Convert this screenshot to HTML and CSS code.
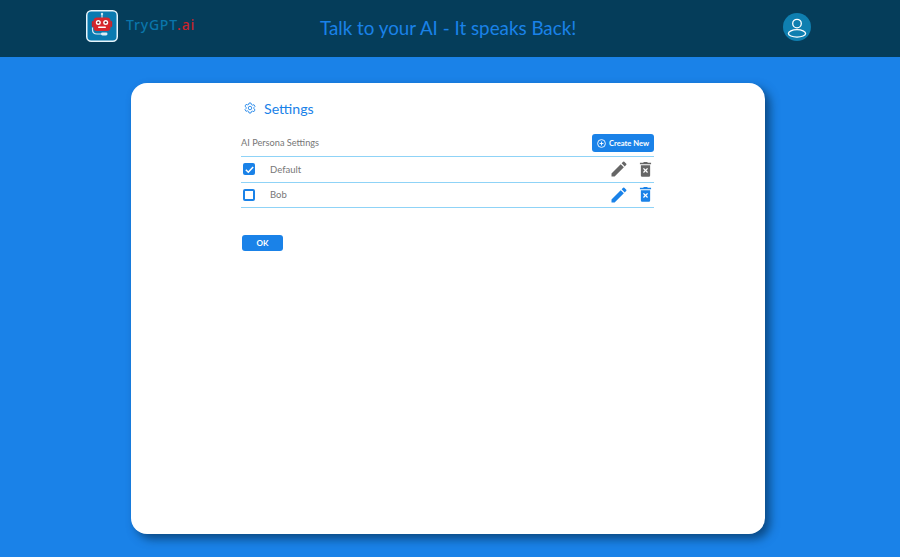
FILE: index.html
```html
<!DOCTYPE html>
<html lang="en">
<head>
<meta charset="utf-8">
<title>TryGPT.ai</title>
<link rel="stylesheet" href="styles.css">
</head>
<body>
<header class="topbar">
  <div class="brand">
    <svg class="logo" viewBox="0 0 32 32" width="32" height="32">
      <rect x="0.75" y="0.75" width="30.5" height="30.5" rx="4.5" fill="#0a7ab0" stroke="#e8f4fa" stroke-width="1.5"/>
      <path d="M16 4v4" stroke="#cfe6f2" stroke-width="1.2"/>
      <circle cx="16" cy="4" r="1.2" fill="#cfe6f2"/>
      <rect x="5.800" y="11" width="2" height="6" rx="1" fill="#c8242b"/>
      <rect x="24.200" y="11" width="2" height="6" rx="1" fill="#c8242b"/>
      <rect x="7.500" y="7.500" width="17" height="13.500" rx="3.500" fill="#d8262c"/>
      <circle cx="12.300" cy="12.500" r="2.500" fill="#fff"/>
      <circle cx="19.700" cy="12.500" r="2.500" fill="#fff"/>
      <circle cx="12.300" cy="12.500" r="1.100" fill="#6b1216"/>
      <circle cx="19.700" cy="12.500" r="1.100" fill="#6b1216"/>
      <rect x="12" y="16.500" width="8" height="1.600" rx="0.800" fill="#fff"/>
      <path d="M6.500 17.500v2c0 3 1.500 4.500 4.500 4.500h5" stroke="#dcecf5" stroke-width="1.200" fill="none"/>
      <rect x="15" y="22.600" width="6.500" height="2.800" rx="1.400" fill="#dcecf5"/>
    </svg>
    <span class="brand-name">TryGPT<span class="brand-ai">.ai</span></span>
  </div>
  <div class="tagline">Talk to your AI - It speaks Back!</div>
  <div class="avatar">
    <svg viewBox="0 0 28 28" width="28" height="28">
      <circle cx="14" cy="14" r="14" fill="#0f7fb0"/>
      <circle cx="14" cy="10.600" r="4.300" fill="none" stroke="#fff" stroke-width="1.300"/>
      <ellipse cx="14" cy="20.400" rx="8.600" ry="3.700" fill="none" stroke="#fff" stroke-width="1.300"/>
    </svg>
  </div>
</header>
<main class="stage">
  <section class="card">
    <h1 class="title">
      <svg class="gear" viewBox="0 0 24 24" width="12" height="12" fill="none" stroke="#1a82e8" stroke-width="1.700" stroke-linejoin="round">
        <path d="M10 2h4l.7 3 2.300 1.300 3-.9 2 3.400-2.200 2.200v2.600l2.200 2.200-2 3.400-3-.9L14.700 19 14 22h-4l-.7-3L7 17.700l-3 .9-2-3.400 2.200-2.200V10.400L2 8.200l2-3.400 3 .9L9.300 5z"/>
        <circle cx="12" cy="12" r="3.500"/>
      </svg>
      <span>Settings</span>
    </h1>
    <div class="section-head">
      <span class="section-label">AI Persona Settings</span>
      <button class="btn btn-create">
        <svg viewBox="0 0 12 12" width="9" height="9" fill="none" stroke="#fff" stroke-width="1.200">
          <circle cx="6" cy="6" r="5.200"/>
          <path d="M6 3.400v5.200M3.400 6h5.200"/>
        </svg>
        Create New
      </button>
    </div>
    <ul class="persona-list">
      <li class="persona">
        <span class="check check-on">
          <svg viewBox="0 0 12 12" width="11" height="11" fill="none" stroke="#fff" stroke-width="1.700"><path d="M2 6.300l2.700 2.700L10 3.300"/></svg>
        </span>
        <span class="persona-name">Default</span>
        <span class="actions muted">
          <svg class="pencil" viewBox="0 0 24 24" width="20" height="20"><path d="M3 17.250V21h3.750L17.810 9.940l-3.750-3.750L3 17.250zM20.710 7.040a1 1 0 0 0 0-1.410l-2.340-2.340a1 1 0 0 0-1.410 0l-1.830 1.830 3.750 3.750 1.830-1.830z"/></svg>
          <svg class="trash" viewBox="0 0 14 16" width="13" height="15"><path fill-rule="evenodd" d="M1 0.800h3.500L5.200 0h3.600l.7.8H13v1.600H1zM2 3.400h10V14.400a1.400 1.400 0 0 1-1.400 1.400H3.400A1.400 1.400 0 0 1 2 14.400zM5.300 6.300L4.300 7.300l1.700 1.700-1.700 1.700 1 1L7 10l1.700 1.700 1-1L8 9l1.700-1.700-1-1L7 8z"/></svg>
        </span>
      </li>
      <li class="persona">
        <span class="check"></span>
        <span class="persona-name">Bob</span>
        <span class="actions">
          <svg class="pencil" viewBox="0 0 24 24" width="20" height="20"><path d="M3 17.250V21h3.750L17.810 9.940l-3.750-3.750L3 17.250zM20.710 7.040a1 1 0 0 0 0-1.410l-2.340-2.340a1 1 0 0 0-1.410 0l-1.830 1.830 3.750 3.750 1.830-1.830z"/></svg>
          <svg class="trash" viewBox="0 0 14 16" width="13" height="15"><path fill-rule="evenodd" d="M1 0.800h3.500L5.200 0h3.600l.7.8H13v1.600H1zM2 3.400h10V14.400a1.400 1.400 0 0 1-1.400 1.400H3.400A1.400 1.400 0 0 1 2 14.400zM5.300 6.300L4.300 7.300l1.700 1.700-1.700 1.700 1 1L7 10l1.700 1.700 1-1L8 9l1.700-1.700-1-1L7 8z"/></svg>
        </span>
      </li>
    </ul>
    <button class="btn btn-ok">OK</button>
  </section>
</main>
</body>
</html>
```
FILE: styles.css
```css
* { box-sizing: border-box; }
html, body { margin: 0; height: 100%; }
body {
  display: flex;
  flex-direction: column;
  height: 557px;
  overflow: hidden;
  background: #1a82e8;
  font-family: Lato, "Open Sans", sans-serif;
}
.topbar {
  position: relative;
  flex: 0 0 57px;
  display: flex;
  align-items: center;
  padding: 0 90px 0 86px;
  background: #053d5a;
  justify-content: space-between;
}
.brand { display: flex; align-items: center; gap: 8px; margin-top: -6px; }
.logo { display: block; }
.brand-name {
  font-family: "Noto Sans", sans-serif;
  font-size: 14px;
  font-weight: 500;
  letter-spacing: 0.8px;
  color: #0a76ab;
  margin-top: -2px;
}
.brand-ai { color: #c8242b; }
.tagline {
  position: absolute;
  left: 320px;
  top: 15px;
  font-family: Lato, sans-serif;
  font-size: 18.800px;
  font-weight: 400;
  line-height: 26px;
  color: #1a82e8;
}
.avatar { margin-top: -3px; height: 28px; margin-right: -1px; }
.stage { flex: 1; padding: 26px 135px 23px 131px; }
.card {
  height: 451px;
  padding: 18px 111px 0 110px;
  background: #fff;
  border-radius: 16px;
  box-shadow: 5px 5px 10px rgba(4, 50, 90, 0.7);
}
.title {
  display: flex;
  align-items: center;
  gap: 8px;
  margin: 0 0 0 3px;
  height: 15px;
  font-size: 14.200px;
  font-weight: 400;
  line-height: 15px;
  color: #1a82e8;
}
.gear { display: block; margin-top: -1px; }
.section-head {
  display: flex;
  justify-content: space-between;
  align-items: center;
  margin-top: 18px;
  height: 18px;
}
.section-label { font-size: 9.200px; color: #777; margin-top: -2px; }
.btn {
  border: 0;
  border-radius: 3px;
  background: #1a82e8;
  color: #fff;
  font-family: inherit;
  font-weight: 700;
  padding: 0;
}
.btn-create {
  display: flex;
  align-items: center;
  justify-content: center;
  gap: 3px;
  width: 62px;
  height: 18px;
  font-size: 7.600px;
}
.persona-list {
  list-style: none;
  margin: 4px 0 0;
  padding: 0;
  border-top: 1px solid #8fd3f7;
}
.persona {
  display: flex;
  align-items: center;
  height: 25.500px;
  padding: 0 2.500px 0 2px;
  border-bottom: 1px solid #8fd3f7;
}
.check {
  display: flex;
  align-items: center;
  justify-content: center;
  flex: 0 0 12px;
  height: 12px;
  border: 2px solid #1a82e8;
  border-radius: 2px;
}
.check-on { background: #1a82e8; border: 0; }
.persona-name { margin-left: 15px; font-size: 9.500px; color: #777; }
.actions {
  display: flex;
  align-items: center;
  gap: 10px;
  margin-left: auto;
  fill: #1a82e8;
}
.actions.muted { fill: #666; }
.pencil, .trash { display: block; }
.btn-ok {
  display: block;
  margin-top: 27px;
  margin-left: 1px;
  width: 41px;
  height: 16px;
  font-size: 8px;
}
```
